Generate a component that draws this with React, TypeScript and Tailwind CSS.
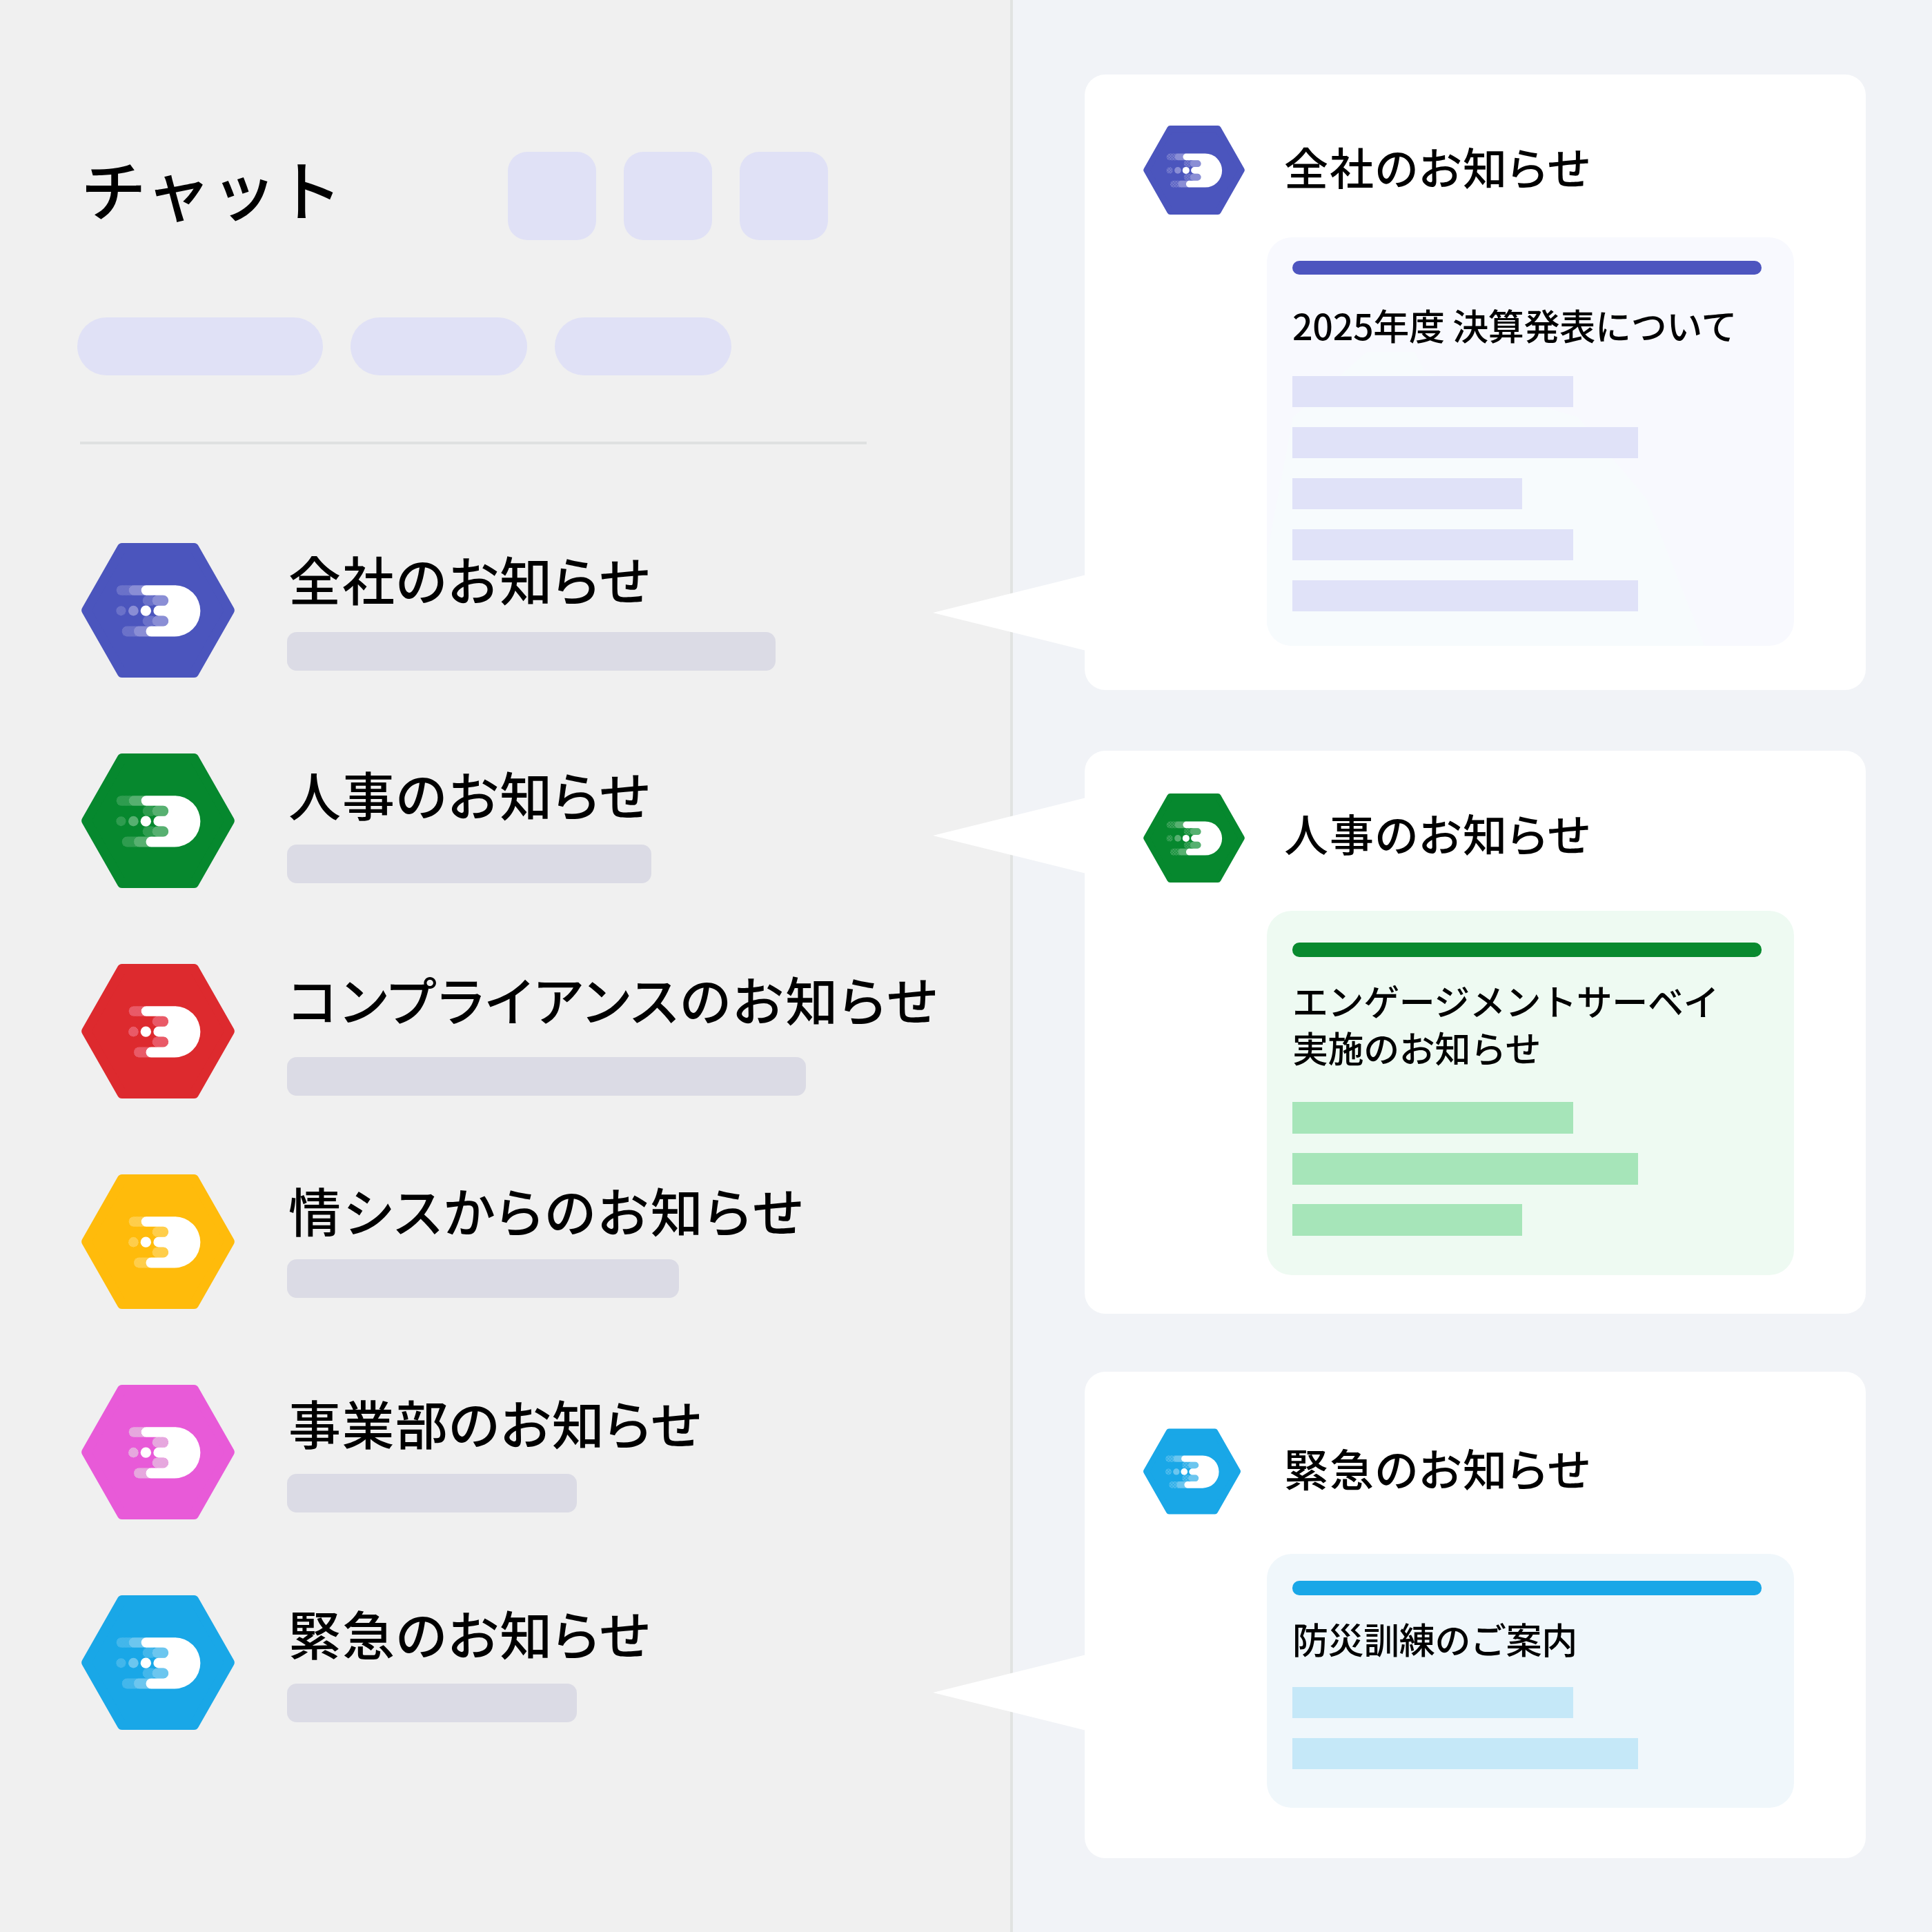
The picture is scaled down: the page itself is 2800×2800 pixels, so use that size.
import { useId } from "react";

type Tone = {
  hex: string;
  tint?: string;
  dither: string;
};

const purple: Tone = { hex: "#4b55bd", tint: "#8a8ed5", dither: "#8a8ed5" };
const green: Tone = { hex: "#06882e", tint: "#57b070", dither: "#57b070" };
const red: Tone = { hex: "#dd2a2e", dither: "#f58aa0" };
const yellow: Tone = { hex: "#ffbb0b", dither: "#ffe08a" };
const pink: Tone = { hex: "#e85ad8", dither: "#e4f5e4" };
const blue: Tone = { hex: "#19a7e7", tint: "#6cc6ef", dither: "#6cc6ef" };

// logo: hexagon with a speeding "D" mark
const HexLogo = ({ tone, className }: { tone: Tone; className: string }) => {
  const id = "d" + useId().replace(/[^a-zA-Z0-9]/g, "");
  const fill = `url(#${id})`;
  return (
    <svg viewBox="52 50 666 586" className={className}>
      <defs>
        <pattern
          id={id}
          width="6"
          height="6"
          patternUnits="userSpaceOnUse"
          patternTransform="translate(52 50)"
        >
          <rect width="3" height="3" fill={tone.dither} />
          <rect x="3" y="3" width="3" height="3" fill={tone.dither} />
        </pattern>
      </defs>
      <polygon
        points="73,343 228,71 542,71 697,343 542,615 228,615"
        fill={tone.hex}
        stroke={tone.hex}
        strokeWidth="42"
        strokeLinejoin="round"
      />
      {tone.tint ? (
        <>
          <rect x="204" y="234" width="90" height="44" rx="22" fill={fill} />
          <circle cx="224" cy="345" r="21" fill={fill} />
          <rect x="228" y="412" width="90" height="45" rx="22" fill={fill} />
          <rect x="318" y="278" width="60" height="45" rx="22" fill={fill} />
          <rect x="318" y="367" width="60" height="45" rx="22" fill={fill} />
          <rect x="258" y="234" width="90" height="44" rx="22" fill={tone.tint} />
          <circle cx="278" cy="345" r="22" fill={tone.tint} />
          <rect x="280" y="412" width="90" height="45" rx="22" fill={tone.tint} />
          <rect x="360" y="278" width="70" height="45" rx="22" fill={tone.tint} />
          <rect x="360" y="367" width="70" height="45" rx="22" fill={tone.tint} />
        </>
      ) : (
        <>
          <rect x="258" y="234" width="90" height="44" rx="22" fill={fill} />
          <circle cx="278" cy="345" r="22" fill={fill} />
          <rect x="280" y="412" width="90" height="45" rx="22" fill={fill} />
          <rect x="360" y="278" width="70" height="45" rx="22" fill={fill} />
          <rect x="360" y="367" width="70" height="45" rx="22" fill={fill} />
        </>
      )}
      <path
        d="M334 234H458A111.5 111.5 0 0 1 458 457H355A22.5 22.5 0 0 1 355 412H408A22.5 22.5 0 0 0 408 367H387A22 22 0 0 1 387 323H408A22.5 22.5 0 0 0 408 278H334A22 22 0 0 1 334 234Z"
        fill="#fff"
      />
      <circle cx="332" cy="345" r="23" fill="#fff" />
    </svg>
  );
};

const rows = [
  { tone: purple, title: "全社のお知らせ", top: "pt-[11px]", gap: "mt-[38px]", bar: "w-[708px]", track: "tracking-[2px]" },
  { tone: green, title: "人事のお知らせ", top: "pt-[18px]", gap: "mt-[34px]", bar: "w-[528px]", track: "tracking-[2px]" },
  { tone: red, title: "コンプライアンスのお知らせ", top: "pt-[10px]", gap: "mt-[45px]", bar: "w-[752px]", track: "tracking-[3.2px]" },
  { tone: yellow, title: "情シスからのお知らせ", top: "pt-[11px]", gap: "mt-[32px]", bar: "w-[568px]", track: "tracking-[3.5px]" },
  { tone: pink, title: "事業部のお知らせ", top: "pt-[14px]", gap: "mt-[35px]", bar: "w-[420px]", track: "tracking-[1.5px]" },
  { tone: blue, title: "緊急のお知らせ", top: "pt-[14px]", gap: "mt-[34px]", bar: "w-[420px]", track: "tracking-[2px]" },
];

const Tail = ({ className }: { className: string }) => (
  <svg viewBox="0 0 222 110" className={`absolute left-[-220px] h-[110px] w-[222px] ${className}`}>
    <polygon points="0,55 222,0 222,110" fill="#fff" />
  </svg>
);

const SidePanel = () => (
  <div className="h-full w-[1468px] shrink-0 border-r-4 border-[#e1e3e2] bg-[#f0f0f0] pl-[112px] pt-[220px]">
    <div className="flex h-[128px] items-center">
      <div className="w-[624px] pb-[24px] pl-[5px] text-[95px] font-medium leading-[104px] text-black">
        チャット
      </div>
      <div className="flex gap-10">
        <div className="h-[128px] w-[128px] rounded-[28px] bg-[#e0e1f6]" />
        <div className="h-[128px] w-[128px] rounded-[28px] bg-[#e0e1f6]" />
        <div className="h-[128px] w-[128px] rounded-[28px] bg-[#e0e1f6]" />
      </div>
    </div>
    <div className="mt-[112px] flex gap-10">
      <div className="h-[84px] w-[356px] rounded-[42px] bg-[#e0e1f6]" />
      <div className="h-[84px] w-[256px] rounded-[42px] bg-[#e0e1f6]" />
      <div className="h-[84px] w-[256px] rounded-[42px] bg-[#e0e1f6]" />
    </div>
    <div className="ml-[4px] mt-[96px] h-[4px] w-[1140px] bg-[#dfe1e1]" />
    <div className="ml-[6px] mt-[143px] flex flex-col gap-[110px]">
      {rows.map((row) => (
        <div key={row.title} className="flex h-[195px]">
          <HexLogo tone={row.tone} className="h-[195px] w-[222px] shrink-0" />
          <div className={`ml-[76px] whitespace-nowrap ${row.top}`}>
            <div
              className={`pl-[2px] text-[76px] font-medium leading-[80px] text-black [font-feature-settings:'palt'] ${row.track}`}
            >
              {row.title}
            </div>
            <div className={`h-[56px] rounded-[14px] bg-[#dbdbe5] ${row.gap} ${row.bar}`} />
          </div>
        </div>
      ))}
    </div>
  </div>
);

const Bars = ({ color, size, widths }: { color: string; size: string; widths: string[] }) => (
  <div className={`relative flex flex-col ${size}`}>
    {widths.map((w, i) => (
      <div key={i} className={`h-full ${w} ${color}`} />
    ))}
  </div>
);

const CardTitle = ({ children, lift = "pb-[14px]" }: { children: string; lift?: string }) => (
  <div
    className={`ml-[57px] text-[64px] font-medium leading-[80px] tracking-[2px] text-black [font-feature-settings:'palt'] ${lift}`}
  >
    {children}
  </div>
);

const AnnouncementCards = () => (
  <div className="flex min-w-0 flex-1 flex-col bg-[#f1f3f7] pl-[104px] pt-[108px]">
    {/* 全社 */}
    <div className="relative h-[892px] w-[1132px] rounded-[30px] bg-white pl-[85px] pt-[74px]">
      <Tail className="top-[725px]" />
      <div className="flex h-[129px] items-center">
        <HexLogo tone={purple} className="h-[129px] w-[147px] shrink-0" />
        <CardTitle>全社のお知らせ</CardTitle>
      </div>
      <div className="relative ml-[179px] mt-[33px] h-[592px] w-[764px] overflow-hidden rounded-[36px] bg-[#f8f9fe] px-[37px] pt-[34px]">
        <div className="absolute inset-0 bg-[#f7fbfd] [clip-path:polygon(19%_28%,28%_28%,30%_33%,59%_44%,72%_64%,83%_100%,0%_100%,0%_78%,2%_64%,5%_44%)]" />
        <div className="relative h-[20px] w-[680px] rounded-[10px] bg-[#4d55bf]" />
        <div className="relative mb-[40px] mt-[39px] text-[52px] font-medium leading-[68px] tracking-[-0.3px] text-black">
          2025年度 決算発表について
        </div>
        <Bars
          color="bg-[#e0e2f8]"
          size="h-[341px] gap-[29px]"
          widths={["w-[407px]", "w-[501px]", "w-[333px]", "w-[407px]", "w-[501px]"]}
        />
      </div>
    </div>

    {/* 人事 */}
    <div className="relative mt-[88px] h-[816px] w-[1132px] rounded-[30px] bg-white pl-[85px] pt-[62px]">
      <Tail className="top-[68px]" />
      <div className="flex h-[129px] items-center">
        <HexLogo tone={green} className="h-[129px] w-[147px] shrink-0" />
        <CardTitle lift="pb-[18px]">人事のお知らせ</CardTitle>
      </div>
      <div className="ml-[179px] mt-[41px] h-[528px] w-[764px] rounded-[36px] bg-[#eefaf2] px-[37px] pt-[46px]">
        <div className="h-[21px] w-[680px] rounded-[10px] bg-[#088a2f]" />
        <div className="mb-[45px] mt-[29px] text-[52px] font-medium leading-[68px] tracking-[-0.4px] text-black">
          エンゲージメントサーベイ
          <br />
          実施のお知らせ
        </div>
        <Bars
          color="bg-[#a6e5b9]"
          size="h-[194px] gap-[28px]"
          widths={["w-[407px]", "w-[501px]", "w-[333px]"]}
        />
      </div>
    </div>

    {/* 緊急 */}
    <div className="relative mt-[84px] h-[705px] w-[1132px] rounded-[30px] bg-white pl-[85px] pt-[82px]">
      <Tail className="top-[410px]" />
      <div className="flex h-[125px] items-center">
        <HexLogo tone={blue} className="h-[125px] w-[141px] shrink-0" />
        <div className="w-[6px]" />
        <CardTitle>緊急のお知らせ</CardTitle>
      </div>
      <div className="ml-[179px] mt-[57px] h-[368px] w-[764px] rounded-[36px] bg-[#f0f7fb] px-[37px] pt-[39px]">
        <div className="h-[21px] w-[680px] rounded-[10px] bg-[#19a7e7]" />
        <div className="mb-[36px] mt-[29px] text-[52px] font-medium leading-[68px] tracking-[-0.4px] text-black">
          防災訓練のご案内
        </div>
        <Bars
          color="bg-[#c5e8f8]"
          size="h-[119px] gap-[29px]"
          widths={["w-[407px]", "w-[501px]"]}
        />
      </div>
    </div>
  </div>
);

export default function App() {
  return (
    <div className="flex h-[2800px] w-[2800px] overflow-hidden font-['Noto_Sans_CJK_JP',sans-serif]">
      <SidePanel />
      <AnnouncementCards />
    </div>
  );
}
